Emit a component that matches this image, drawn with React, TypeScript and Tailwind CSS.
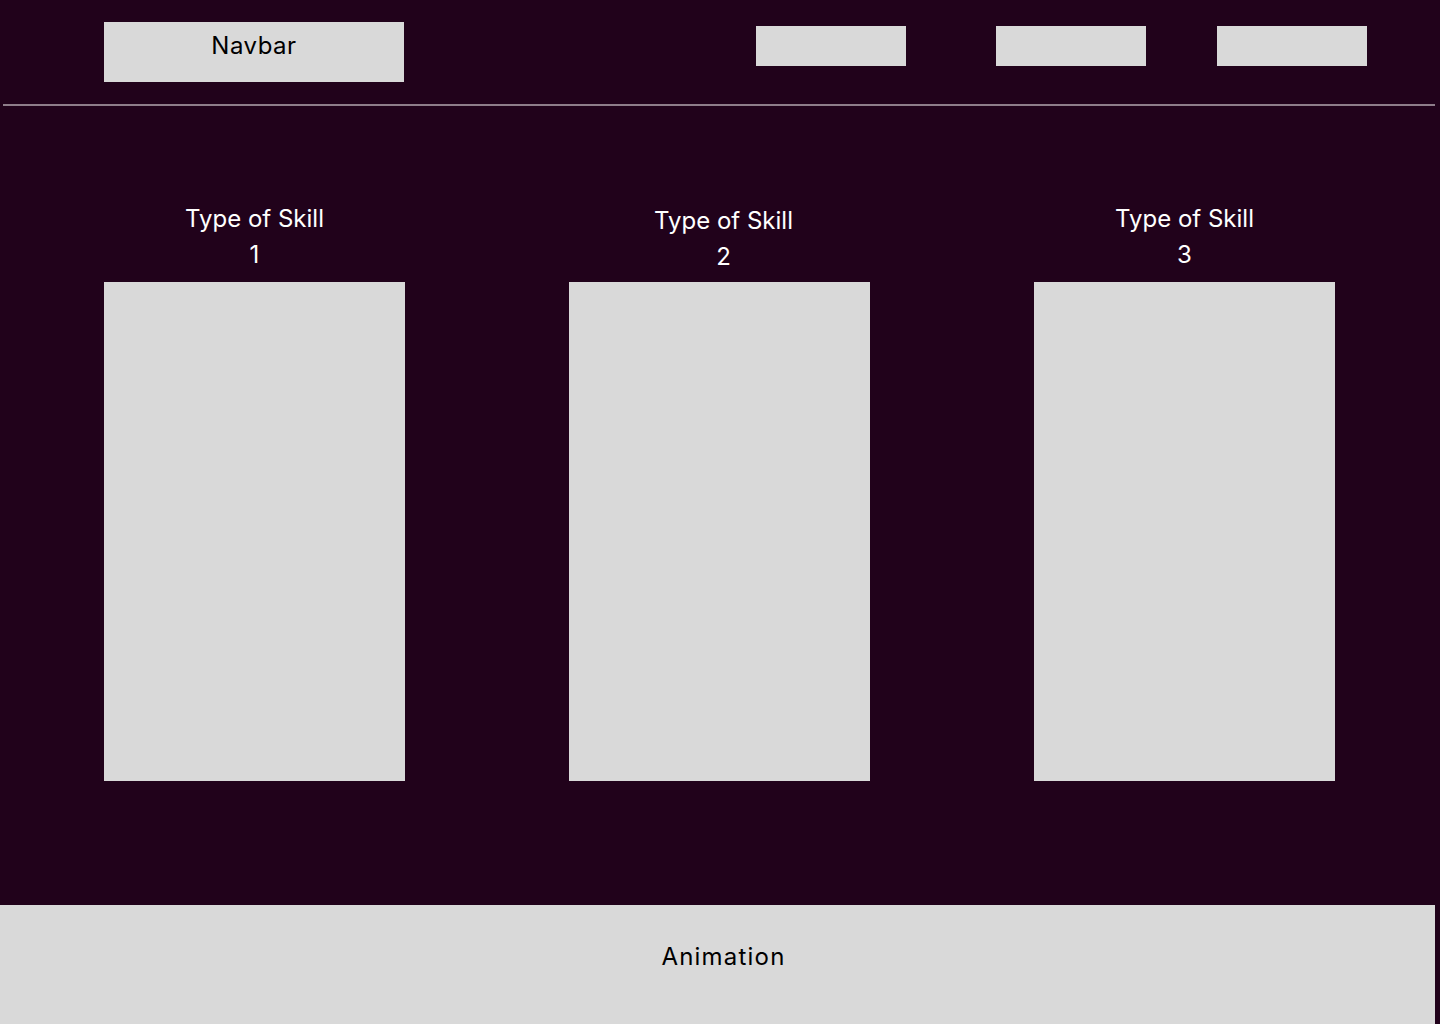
import React from 'react';

const skills = [
    { id: 1, shift: '' },
    { id: 2, shift: 'pl-[8px] pt-[2px]' },
    { id: 3, shift: '' },
];

const SkillColumn: React.FC<{ id: number; shift: string }> = ({ id, shift }) => (
    <div className="flex flex-col w-[301px]">
        <div className={`h-[81px] flex flex-col items-center text-white text-[24px] leading-[36px] ${shift}`}>
            <span>Type of Skill</span>
            <span>{id}</span>
        </div>
        <div className="h-[499px] bg-[#d9d9d9]" />
    </div>
);

export default function App() {
    return (
        <div className="w-[1440px] h-[1024px] bg-[#21021b] flex flex-col font-['Inter',sans-serif] overflow-hidden">
            <header className="h-[104px] flex items-start pl-[104px] pr-[73px]">
                <div className="mt-[22px] w-[300px] h-[60px] bg-[#d9d9d9] flex justify-center pt-[8px]">
                    <span className="text-black text-[24px] leading-[32px] tracking-[0.5px]">Navbar</span>
                </div>
                <nav className="ml-auto mt-[26px] flex">
                    <div className="w-[150px] h-[40px] bg-[#d9d9d9]" />
                    <div className="ml-[90px] w-[150px] h-[40px] bg-[#d9d9d9]" />
                    <div className="ml-[71px] w-[150px] h-[40px] bg-[#d9d9d9]" />
                </nav>
            </header>
            <div className="ml-[3px] w-[1432px] h-[2px] bg-[#8e7d8a]" />

            <main className="flex-1 flex gap-[164px] pl-[104px] pt-[95px]">
                {skills.map((s) => (
                    <SkillColumn key={s.id} id={s.id} shift={s.shift} />
                ))}
            </main>

            <footer className="h-[119px] w-[1435px] bg-[#d9d9d9] flex justify-center pl-[12px] pt-[36px]">
                <span className="text-black text-[24px] leading-[32px] tracking-[1.2px]">Animation</span>
            </footer>
        </div>
    );
}
